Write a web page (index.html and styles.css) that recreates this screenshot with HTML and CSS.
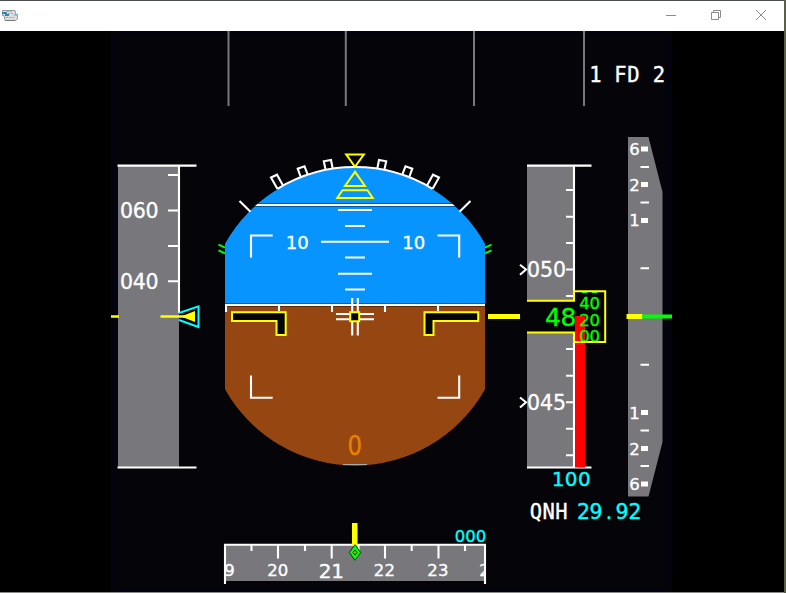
FILE: index.html
```html
<!DOCTYPE html>
<html lang="en">
<head>
<meta charset="utf-8">
<title>Primary Flight Display</title>
<link rel="stylesheet" href="styles.css">
</head>
<body>
<div class="window">
  <header class="titlebar">
    <svg class="app-icon" width="16" height="13" viewBox="0 0 16 13">
      <path d="M.5 1.500H13L14 5.500H15.500V10L13.500 11.500H3L2 6.500H.5Z" fill="#dedede" stroke="#999"/>
      <path d="M0 3H5V5H7V7H3V5H0Z" fill="#2c8bad"/>
      <path d="M12 5H16V6.500H12Z" fill="#73b5ca"/>
      <path d="M5 2.500H11M6 4.500H12M4 8.500H13" stroke="#aaa" stroke-dasharray="2 1"/>
      <path d="M3 11.500H13.500" stroke="#777"/>
    </svg>
    <div class="controls">
      <svg width="12" height="12" viewBox="0 0 12 12"><path d="M1 6.500H11"/></svg>
      <svg width="12" height="12" viewBox="0 0 12 12"><path d="M1.500 3.500H8.500V10.500H1.500ZM3.500 3.500V1.500H10.500V8.500H8.500"/></svg>
      <svg width="12" height="12" viewBox="0 0 12 12"><path d="M1 1L11 11M11 1L1 11"/></svg>
    </div>
  </header>
  <svg class="display" width="784" height="561" viewBox="0 31 784 561">
    <defs>
      <clipPath id="ball"><path d="M225 243.700A149 149 0 0 1 485 243.700V389.300A149 149 0 0 1 225 389.300Z"/></clipPath>
      <clipPath id="drum"><rect x="575" y="292" width="30" height="49.500"/></clipPath>
      <clipPath id="tape"><rect x="226" y="545" width="258.500" height="36"/></clipPath>
      <g id="bank">
        <path d="M277.500 189L271 177.500L277 174.700L283 185.500M300.700 177L297.700 168.700L304.500 166.300L307.700 174.700M325.500 169.300L323.800 161.300L331 160L332.700 168.500M239.500 201L250.500 211.800"/>
        <path class="green" d="M218.500 244.700L225 247.700M218.500 250.300L225 253.300"/>
      </g>
    </defs>
    <rect class="edge" x="111" y="31" width="561" height="561"/>
    <rect class="panel" x="118" y="35" width="548" height="552"/>

    <!-- mode annunciator -->
    <path class="divider" d="M228.500 31V106M345.800 31V106M474 31V106M584 31V106"/>
    <text class="mono s21" y="81.500" x="595.500 608 620.500 633.500 646 659">1 FD 2</text>

    <!-- airspeed -->
    <rect class="gray" x="118" y="165" width="61" height="303"/>
    <path class="line" d="M117.500 165.600H196.500M117.500 467.500H196.500M179 165V313M168 175H179M168 210.500H179M168 246H179M168 281.300H179"/>
    <text class="s21" y="218" x="126.500 139.300 152">060</text>
    <text class="s21" y="289" x="126.500 139.300 152">040</text>
    <path class="yellow thick" d="M111 316.500H119M160.500 316.500H186"/>
    <path class="cyan" d="M179 313L198.500 306.300V327L179 320"/>
    <path class="yfill" d="M181 316.500L195 311V322Z"/>

    <!-- attitude -->
    <g clip-path="url(#ball)">
      <rect class="sky" x="225" y="160" width="260" height="145"/>
      <rect class="ground" x="225" y="305" width="260" height="165"/>
      <path class="shade" d="M225 203.500H485M225 206.500H485M225 303.500H485M225 306.500H485"/>
      <path class="line" d="M225 205H485M225 305H485"/>
      <path class="line" d="M226 306V312M279 306V311M332 306V312M385 306V312M438 306V311"/>
      <path class="rim" d="M343 464.700H367"/>
    </g>
    <path class="line" d="M277.500 188.800A149 149 0 0 1 432.500 188.800"/>
    <use href="#bank" class="line"/>
    <use href="#bank" class="line" transform="translate(710 0) scale(-1 1)"/>
    <path class="yellow" d="M346.200 154.500H363.800L355 166.800ZM355 171.800L345 186H365ZM342.500 190.300H367.500L372.700 198H337.300Z"/>
    <path class="line" d="M338 210H372M345 226H365M321 241.800H389M345 257.500H365M338 273.700H372M345 289.500H365"/>
    <path class="line" d="M251 257.500V235.500H272.700M437.500 235.500H459.200V257.500M251 375.500V397.700H272.700M437.500 397.700H459.200V375.500"/>
    <text class="s18" y="249" x="291.500 303">10</text>
    <text class="s18" y="249" x="408 419.500">10</text>
    <path class="line" d="M352.200 298V335.500M357.800 298V335.500M336 314H374M336 319.300H374"/>
    <path class="wing" d="M350.200 312.300H359.200V321.200H350.200ZM232 312.300H285.700V335H276.500V321H232ZM424.500 312.300H478.200V321H433.500V335H424.500Z"/>
    <text class="amber" y="454.700" x="354.800" textLength="14.500" lengthAdjust="spacingAndGlyphs">0</text>
    <rect class="yfill" x="488" y="314" width="32" height="5"/>

    <!-- altitude -->
    <rect class="gray" x="527" y="165" width="46" height="303"/>
    <path class="line" d="M527 165.600H591.500M527 467.500H591.500M574 165V468M566 190H573M566 216.700H573M566 243H573M566 269.500H573M566 296H573M566 349H573M566 375.700H573M566 402.200H573M566 428.700H573M566 455.200H573"/>
    <path class="line" d="M520 264.700L526 269.500L520 274.700M520 397.500L526 402.300L520 407.500"/>
    <text class="s21" y="277" x="533.500 546.500 559.500">050</text>
    <text class="s21" y="410" x="533.500 546.500 559.500">045</text>
    <rect class="panel" x="527" y="300" width="60" height="32"/>
    <rect class="panel" x="574" y="291" width="31" height="51"/>
    <rect class="red" x="575" y="316" width="10" height="151.500"/>
    <text class="s25 lime" y="325.500" x="553 568.500">48</text>
    <g clip-path="url(#drum)">
      <path class="green" d="M582 292H587M592 292H597"/>
      <text class="s17 lime" y="309.300" x="584.500 594.700">40</text>
      <text class="s17 lime" y="325.800" x="584.500 594.700">20</text>
      <text class="s17 lime" y="342.300" x="584.500 594.700">00</text>
    </g>
    <path class="yellow" d="M527 300.700H574V291.200H605.200V342H574V332.500H527"/>
    <text class="s20 aqua" y="486" x="558 571 584.300">100</text>
    <text class="mono s21" y="519" x="536 548.700 561.300">QNH</text>
    <text class="s21 aqua" y="519" x="583.500 596 609 622 635">29.92</text>

    <!-- vertical speed -->
    <path class="gray" d="M628 137H648.500L662.500 192V442L648.500 496.500H628Z"/>
    <path class="block" d="M641 149H648M641 184.500H648M641 220.500H648M641 412.500H648M641 448.500H648M641 484H648"/>
    <path class="line" d="M640.500 167H649M640.500 202.500H649M640.500 268.300H649M640.500 364.700H649M640.500 430.500H649M640.500 466H649"/>
    <text class="s17" x="634.500" y="155">6</text>
    <text class="s17" x="634.500" y="191">2</text>
    <text class="s17" x="634.500" y="226.300">1</text>
    <text class="s17" x="634.500" y="418.700">1</text>
    <text class="s17" x="634.500" y="455">2</text>
    <text class="s17" x="634.500" y="490">6</text>
    <rect class="yfill" x="626.500" y="314" width="16" height="5"/>
    <rect class="gfill" x="642" y="314.500" width="30" height="4"/>

    <!-- heading -->
    <rect class="gray" x="225" y="544" width="260" height="37"/>
    <path class="line" d="M224 544.700H486M225 544V584M485 544V584M278 545V558.500M331.700 545V558.500M385 545V558.500M438.500 545V558.500M251.500 545V551M305 545V551M358.500 545V551M411.700 545V551M465 545V551"/>
    <g clip-path="url(#tape)">
      <text class="s17" y="576" x="229.500">9</text>
      <text class="s17" y="576" x="272.500 283">20</text>
      <text class="s20" y="577.500" x="325 337.500">21</text>
      <text class="s17" y="576" x="379 389.700">22</text>
      <text class="s17" y="576" x="432.500 443.300">23</text>
      <text class="s17" y="576" x="484.500">2</text>
    </g>
    <rect class="yfill" x="352" y="523" width="5.500" height="22"/>
    <path class="bug" d="M355 544.700L360.700 552.500L355 560.300L349.300 552.500Z"/>
    <path class="bug-core" d="M355 550L357 552.500L355 555L353 552.500Z"/>
    <text class="s17 aqua" y="541.500" x="460 470.500 481">000</text>
  </svg>
</div>
</body>
</html>
```
FILE: styles.css
```css
body {
  margin: 0;
  height: 593px;
  overflow: hidden;
  background: linear-gradient(90deg, #8a8a84 0 784px, #5c5e4c 784px);
}

.window {
  width: 784px;
  height: 592px;
  background: #000;
  border-top: 1px solid #4b4f53;
  box-sizing: border-box;
}

.titlebar {
  display: flex;
  align-items: center;
  justify-content: space-between;
  height: 30px;
  padding: 0 17px 2px 2px;
  box-sizing: border-box;
  background: #fff;
}

.controls {
  display: flex;
  gap: 33px;
}

.controls svg {
  fill: none;
  stroke: #8c8c8c;
  stroke-width: 1;
}

.display {
  display: block;
}

.display text {
  font-family: "DejaVu Sans", sans-serif;
  fill: #fff;
  stroke: #fff;
  stroke-width: .35;
  text-anchor: middle;
}

.display .mono { font-family: "DejaVu Sans Mono", monospace; }
.s17 { font-size: 16.5px; }
.s18 { font-size: 18px; }
.s20 { font-size: 20px; }
.s21 { font-size: 20.5px; }
.s25 { font-size: 25px; }

.display .lime { fill: #0f0; stroke: #0f0; }
.display .aqua { fill: #0ff; stroke: #0ff; }
.display .amber { fill: #e68200; stroke: #e68200; font-size: 26px; }

.edge { fill: #03030e; }
.panel { fill: #040409; }
.gray { fill: #77777c; }
.sky { fill: #0894ff; }
.ground { fill: #964610; }
.red { fill: #f00; }
.yfill { fill: #ff0; }
.gfill { fill: #0f0; }

.line { fill: none; stroke: #fff; stroke-width: 2.1; }
.divider { stroke: #77777c; stroke-width: 2; }
.shade { stroke: #000; stroke-opacity: .4; stroke-width: 1; }
.rim { stroke: #aaa; stroke-width: 1.5; }
.yellow { fill: none; stroke: #ff0; stroke-width: 2; }
.thick { stroke-width: 2.5; }
.green { stroke: #0f0; stroke-width: 2; }
.cyan { fill: none; stroke: #0ff; stroke-width: 2; }
.wing { fill: #040409; stroke: #ff0; stroke-width: 2; }
.block { stroke: #fff; stroke-width: 5; }
.bug { fill: #0f0; stroke: #063c06; stroke-width: 1; }
.bug-core { fill: #b0b000; stroke: #063c06; stroke-width: 1; }
```
